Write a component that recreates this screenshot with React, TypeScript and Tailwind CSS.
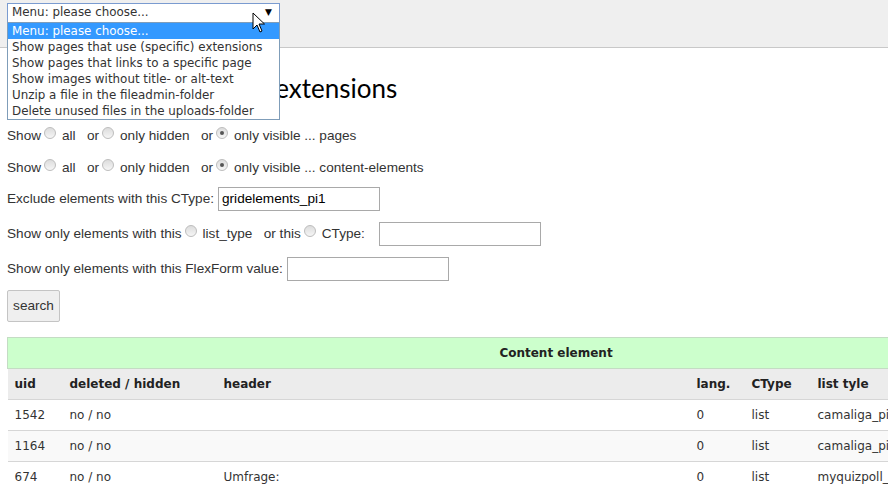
import React from "react";

const body = { fontFamily: '"Liberation Sans", Arial, sans-serif' };
const verdana = { fontFamily: '"DejaVu Sans", Verdana, sans-serif' };

const menuItems = [
  "Menu: please choose...",
  "Show pages that use (specific) extensions",
  "Show pages that links to a specific page",
  "Show images without title- or alt-text",
  "Unzip a file in the fileadmin-folder",
  "Delete unused files in the uploads-folder",
];

const rows = [
  { uid: "1542", del: "no / no", header: "", lang: "0", ctype: "list", list: "camaliga_pi1" },
  { uid: "1164", del: "no / no", header: "", lang: "0", ctype: "list", list: "camaliga_pi1" },
  { uid: "674", del: "no / no", header: "Umfrage:", lang: "0", ctype: "list", list: "myquizpoll_pi1" },
];

const Radio = ({ checked }: { checked?: boolean }) => (
  <span className="relative -top-[3px] ml-[3px] mr-[6px] inline-flex h-[12px] w-[12px] items-center justify-center rounded-full border border-[#bdbdbd] bg-gradient-to-b from-[#dcdcdc] to-[#f6f6f6]">
    {checked && <span className="h-[4px] w-[4px] rounded-full bg-[#555]" />}
  </span>
);

const TextInput = ({ value, w }: { value?: string; w: string }) => (
  <span
    className={`inline-flex h-[24px] items-center border border-[#a9a9a9] bg-white px-[3px] text-[13.6px] text-black ${w}`}
  >
    {value}
  </span>
);

export default function App() {
  return (
    <div className="relative h-[492px] w-[888px] overflow-hidden bg-white text-[13.6px] text-[#333]" style={body}>
      {/* top bar */}
      <div className="h-[48px] border-b border-[#c8c8c8] bg-[#efefef] px-[7px] pt-[3px]">
        <div
          className="flex h-[20px] w-[273px] items-center justify-between border border-[#7a9bd0] bg-white pl-[4px] pr-[7px] text-[11.9px] text-[#333]"
          style={verdana}
        >
          <span>Menu: please choose...</span>
          <span className="text-[9px] text-black">▼</span>
        </div>
      </div>

      <main className="px-[7px]">
        <h1
          className="mt-[24px] mb-[24px] whitespace-nowrap text-[26px] leading-[32px] text-black"
          style={{ fontFamily: "Lato, sans-serif" }}
        >
          Show pages, which use extensions
        </h1>

        <div className="flex h-[16px] items-center whitespace-pre">
          Show<Radio />all   or<Radio />only hidden   or<Radio checked />only visible ... pages
        </div>
        <div className="mt-[16px] flex h-[16px] items-center whitespace-pre">
          Show<Radio />all   or<Radio />only hidden   or<Radio checked />only visible ... content-elements
        </div>
        <div className="mt-[11px] flex items-center">
          <span className="mr-[4px]">Exclude elements with this CType:</span>
          <TextInput value="gridelements_pi1" w="w-[162px]" />
        </div>
        <div className="mt-[11px] flex items-center whitespace-pre">
          Show only elements with this<Radio />list_type   or this<Radio />CType:<span className="w-[14px]" />
          <TextInput w="w-[162px]" />
        </div>
        <div className="mt-[11px] flex items-center">
          <span className="mr-[4px]">Show only elements with this FlexForm value:</span>
          <TextInput w="w-[162px]" />
        </div>
        <button className="mt-[9px] h-[32px] w-[53px] rounded-[2px] border border-[#c4c4c4] bg-[#efefef] text-[13.6px] text-[#333]">
          search
        </button>

        <table className="mt-[15px] w-[1098px] border-collapse text-[12px]" style={verdana}>
          <thead>
            <tr>
              <th colSpan={6} className="h-[31px] border border-[#c4dcc4] bg-[#ccffcc] text-[12px] font-bold text-[#222]">
                Content element
              </th>
            </tr>
            <tr className="h-[31px] bg-[#ececec] text-left font-bold text-[#222]">
              <th className="w-[55px] border-b border-[#d6d6d6] pl-[7px]">uid</th>
              <th className="w-[154px] border-b border-[#d6d6d6] pl-[7px]">deleted / hidden</th>
              <th className="w-[473px] border-b border-[#d6d6d6] pl-[7px]">header</th>
              <th className="w-[55px] border-b border-[#d6d6d6] pl-[7px]">lang.</th>
              <th className="w-[66px] border-b border-[#d6d6d6] pl-[7px]">CType</th>
              <th className="border-b border-[#d6d6d6] pl-[7px]">list tyle</th>
            </tr>
          </thead>
          <tbody>
            {rows.map((r, i) => (
              <tr key={r.uid} className={`h-[31px] ${i % 2 === 1 ? "bg-[#f9f9f9]" : "bg-white"}`}>
                <td className="border-b border-[#d6d6d6] pl-[7px]">{r.uid}</td>
                <td className="border-b border-[#d6d6d6] pl-[7px]">{r.del}</td>
                <td className="border-b border-[#d6d6d6] pl-[7px]">{r.header}</td>
                <td className="border-b border-[#d6d6d6] pl-[7px]">{r.lang}</td>
                <td className="border-b border-[#d6d6d6] pl-[7px]">{r.ctype}</td>
                <td className="border-b border-[#d6d6d6] pl-[7px]">{r.list}</td>
              </tr>
            ))}
          </tbody>
        </table>
      </main>

      {/* open dropdown list */}
      <ul
        className="absolute left-[7px] top-[22px] w-[273px] border border-[#7f9db9] bg-white text-[11.9px] text-[#333]"
        style={verdana}
      >
        {menuItems.map((m, i) => (
          <li
            key={m}
            className={`h-[16px] pl-[4px] leading-[16px] ${i === 0 ? "bg-[#3399ff] text-white" : ""}`}
          >
            {m}
          </li>
        ))}
      </ul>

      {/* mouse cursor */}
      <svg className="absolute left-[252px] top-[12px]" width="14" height="22" viewBox="0 0 14 22">
        <path d="M1 1 L1 17 L5 13 L8 20 L10 19 L7 12 L12.5 12 Z" fill="white" stroke="black" strokeWidth="1" />
      </svg>
    </div>
  );
}
